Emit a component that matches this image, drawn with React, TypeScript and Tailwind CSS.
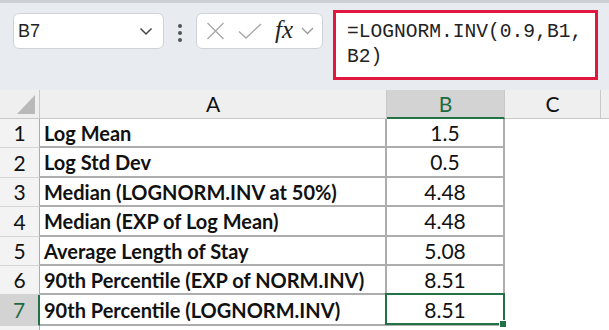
import React from 'react';

const rows: { label: string; value: string; h: string }[] = [
  { label: 'Log Mean', value: '1.5', h: 'h-[29px]' },
  { label: 'Log Std Dev', value: '0.5', h: 'h-[30px]' },
  { label: 'Median (LOGNORM.INV at 50%)', value: '4.48', h: 'h-[29px]' },
  { label: 'Median (EXP of Log Mean)', value: '4.48', h: 'h-[30px]' },
  { label: 'Average Length of Stay', value: '5.08', h: 'h-[29px]' },
  { label: '90th Percentile (EXP of NORM.INV)', value: '8.51', h: 'h-[29px]' },
  { label: '90th Percentile (LOGNORM.INV)', value: '8.51', h: 'h-[31px]' },
];

const cellFont = "font-['Lato','Liberation_Sans',sans-serif]";

const Toolbar = () => (
  <div className="h-[90px] bg-[#e8ecf0] border-t-[3px] border-[#cdd1d5] flex items-start pl-[13px]">
    {/* name box */}
    <div className="mt-[10px] w-[151px] h-[36px] bg-white border border-[#cfd3d8] rounded-[6px] flex items-center justify-between pl-[4px] pr-[10px]">
      <span className="text-[18px] text-[#222] font-['Liberation_Sans',sans-serif]">B7</span>
      <svg width="14" height="9" viewBox="0 0 14 9" fill="none" stroke="#444" strokeWidth="1.5">
        <path d="M1.5 1.5 7 7l5.5-5.5" />
      </svg>
    </div>
    {/* dots */}
    <div className="mt-[21px] w-[32px] flex flex-col items-center gap-[3px]">
      <span className="w-[4px] h-[4px] rounded-full bg-[#555]" />
      <span className="w-[4px] h-[4px] rounded-full bg-[#555]" />
      <span className="w-[4px] h-[4px] rounded-full bg-[#555]" />
    </div>
    {/* cancel / enter / fx */}
    <div className="mt-[10px] w-[127px] h-[36px] bg-white border border-[#cfd3d8] rounded-[6px] flex items-center pl-[9px]">
      <svg width="19" height="18" viewBox="0 0 19 18" fill="none" stroke="#a8a8a8" strokeWidth="1.4">
        <path d="M1.5 1l16 16M17.5 1l-16 16" />
      </svg>
      <svg className="ml-[13px]" width="24" height="16" viewBox="0 0 24 16" fill="none" stroke="#a8a8a8" strokeWidth="1.4">
        <path d="M1 8.5l7 6.5L23 1" />
      </svg>
      <span className="ml-[13px] text-[25px] leading-none italic text-[#222] font-['Liberation_Serif',serif] -mt-[4px]">fx</span>
      <svg className="ml-[8px]" width="13" height="8" viewBox="0 0 13 8" fill="none" stroke="#999" strokeWidth="1.3">
        <path d="M1 1l5.5 5.5L12 1" />
      </svg>
    </div>
    {/* formula */}
    <div className="ml-[10px] mt-[7px] w-[265px] h-[70px] bg-white border-[3px] border-[#e0173f] pl-[11px] pt-[7px] text-[19.6px] leading-[25px] text-[#222] font-['Liberation_Mono',monospace]">
      <div>=LOGNORM.INV(0.9,B1,</div>
      <div>B2)</div>
    </div>
  </div>
);

export default function App() {
  return (
    <div className="w-[609px] h-[330px] overflow-hidden bg-white">
      <Toolbar />
      <div className={`grid grid-cols-[40px_347px_118px_96px_1fr] ${cellFont} text-[21px] text-[#111]`}>
        {/* header row */}
        <div className="h-[29px] bg-[#efefef] border-r border-b border-[#c9c9c9] relative">
          <svg className="absolute left-[17px] top-[5px]" width="18" height="19" viewBox="0 0 18 19">
            <path d="M18 0V19H0Z" fill="#b9b9b9" />
          </svg>
        </div>
        <div className="h-[29px] bg-[#efefef] border-r border-b border-[#c9c9c9] flex items-center justify-center">A</div>
        <div className="h-[29px] bg-[#d3d3d3] border-r border-[#c9c9c9] border-b-[2px] border-b-[#217346] flex items-center justify-center text-[#1e6b41]">B</div>
        <div className="h-[29px] bg-[#efefef] border-r border-b border-[#c9c9c9] flex items-center justify-center">C</div>
        <div className="h-[29px] bg-[#efefef] border-b border-[#c9c9c9]" />

        {rows.map((r, i) => {
          const last = i === rows.length - 1;
          return (
            <React.Fragment key={i}>
              <div
                className={`${r.h} flex items-center justify-center border-b border-[#d4d4d4] ${
                  last
                    ? 'bg-[#d3d3d3] text-[#1e6b41] border-r-[2px] border-r-[#217346]'
                    : 'bg-[#f3f3f3] border-r border-r-[#ababab]'
                }`}
              >
                {i + 1}
              </div>
              <div className={`${r.h} flex items-center pl-[4px] text-[20px] font-bold border-r-[2px] border-b-[2px] border-[#adadad] whitespace-nowrap`}>
                {r.label}
              </div>
              <div className={`${r.h} relative flex items-center justify-center border-r-[2px] border-b-[2px] border-[#adadad]`}>
                {r.value}
                {last && (
                  <>
                    <div className="absolute -left-[2px] -top-[2px] -right-[2px] -bottom-[1px] border-[2px] border-[#217346]" />
                    <div className="absolute -right-[3px] -bottom-[3px] w-[6px] h-[6px] bg-[#217346] outline outline-1 outline-white" />
                  </>
                )}
              </div>
              <div className={`${r.h}`} />
              <div className={`${r.h}`} />
            </React.Fragment>
          );
        })}
        <div className="h-[10px] bg-[#f3f3f3] border-r border-[#ababab]" />
      </div>
    </div>
  );
}
